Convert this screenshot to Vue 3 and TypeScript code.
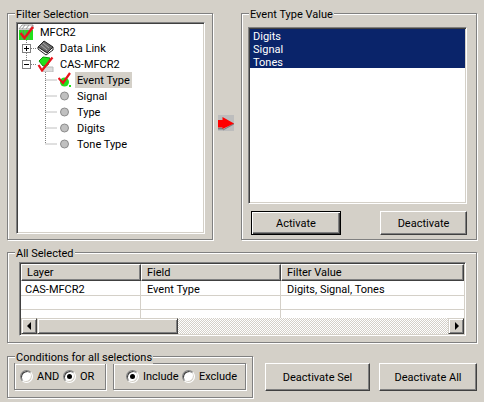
<script setup lang="ts">
interface TreeRow { label: string; level: number; icon: string; selected?: boolean }
const treeRows: TreeRow[] = [
  { label: 'MFCR2', level: 0, icon: 'root' },
  { label: 'Data Link', level: 1, icon: 'book' },
  { label: 'CAS-MFCR2', level: 1, icon: 'cas' },
  { label: 'Event Type', level: 2, icon: 'check', selected: true },
  { label: 'Signal', level: 2, icon: 'dot' },
  { label: 'Type', level: 2, icon: 'dot' },
  { label: 'Digits', level: 2, icon: 'dot' },
  { label: 'Tone Type', level: 2, icon: 'dot' },
]
const values = ['Digits', 'Signal', 'Tones']
const rows = [
  ['CAS-MFCR2', 'Event Type', 'Digits, Signal, Tones'],
  ['', '', ''],
  ['', '', ''],
]
</script>

<template>
  <div class="dialog">
    <div class="top">
      <section class="group filter">
        <span class="legend">Filter Selection</span>
        <div class="sunken tree">
          <svg class="lines" width="187" height="130" aria-hidden="true">
            <path d="M8.5 16V20M8.5 29V36M13 24.500H19M13 40.500H19M27.500 44V120M27.500 56H39M27.500 72H39M27.500 88H39M27.500 104H39M27.500 120H39" stroke="#808080" stroke-dasharray="1 1" fill="none" />
            <g fill="#fff" stroke="#808080">
              <rect x="4.500" y="20.500" width="8" height="8" />
              <rect x="4.500" y="36.500" width="8" height="8" />
            </g>
            <path d="M6 24.500H11M8.500 22V27M6 40.500H11" stroke="#000" />
          </svg>
          <div v-for="r in treeRows" :key="r.label" class="tree-row" :class="'lv' + r.level">
            <svg v-if="r.icon === 'root'" class="ico" width="16" height="16" viewBox="0 0 16 16">
              <path d="M1 5 4 1H15V5Z" fill="#fff" stroke="#999" stroke-width="1" />
              <path d="M4 5 7 1M8 5 11 1M12 5 15 1" stroke="#999" />
              <rect x="1" y="6" width="14" height="10" fill="#22e01c" />
              <path d="M4 6V16M7 6V16M11 6V16" stroke="#808080" />
              <path d="M2.500 9 6.500 14 15 3" stroke="#e8141c" stroke-width="2.400" fill="none" />
            </svg>
            <svg v-else-if="r.icon === 'book'" class="ico" width="17" height="16" viewBox="0 0 17 16">
              <path d="M1 7 7 1 16 7 10 13Z" fill="#6a6a6a" stroke="#222" />
              <path d="M1 7V9L9 15 16 10 16 7 10 13Z" fill="#fff" stroke="#222" />
              <path d="M4 5 10 10M6 3 12 8" stroke="#aaa" />
            </svg>
            <svg v-else-if="r.icon === 'cas'" class="ico" width="17" height="16" viewBox="0 0 17 16">
              <path d="M6 11H16V16H6Z" fill="#ddd" stroke="#bbb" />
              <path d="M2 5 6 1 13 2 11 9 6 10Z" fill="#22e01c" stroke="#0a9a0a" />
              <path d="M1.500 9 5 14.500 15.500 1.500" stroke="#e8141c" stroke-width="2.200" fill="none" />
            </svg>
            <svg v-else-if="r.icon === 'check'" class="ico" width="14" height="16" viewBox="0 0 14 16">
              <circle cx="6.500" cy="10" r="4.500" fill="#22e01c" />
              <rect x="11" y="13" width="2" height="2" fill="#22e01c" />
              <path d="M0.500 6 5 11 12 1" stroke="#e8141c" stroke-width="2.200" fill="none" />
            </svg>
            <svg v-else class="ico" width="14" height="16" viewBox="0 0 14 16">
              <circle cx="6.500" cy="8" r="4" fill="#c0c0c0" stroke="#8c8c8c" />
            </svg>
            <span class="tree-label" :class="{ selected: r.selected }">{{ r.label }}</span>
          </div>
        </div>
      </section>

      <div class="arrow-col">
        <svg class="arrow" width="16" height="16" viewBox="0 0 16 16" aria-hidden="true">
          <rect width="16" height="16" fill="#bdbdbd" />
          <path d="M5 14.500H0V13H5ZM5 14.500V15.500L16 9.500V8Z" fill="#808080" />
          <path d="M0 5H4.500V2L16 8.500 4.500 14V12.500H0Z" fill="#ff0000" />
        </svg>
      </div>

      <section class="group values">
        <span class="legend">Event Type Value</span>
        <div class="sunken list">
          <div v-for="v in values" :key="v" class="list-item">{{ v }}</div>
        </div>
        <div class="value-actions">
          <button class="btn default activate">Activate</button>
          <button class="btn deactivate">Deactivate</button>
        </div>
      </section>
    </div>

    <section class="group selected-group">
      <span class="legend">All Selected</span>
      <div class="sunken table">
        <div class="thead">
          <div class="th c1">Layer</div>
          <div class="th c2">Field</div>
          <div class="th c3">Filter Value</div>
        </div>
        <div class="tbody">
          <div v-for="(row, i) in rows" :key="i" class="tr">
            <div class="td c1 first">{{ row[0] }}</div>
            <div class="td c2">{{ row[1] }}</div>
            <div class="td c3">{{ row[2] }}</div>
          </div>
        </div>
        <div class="scrollbar">
          <div class="sb-btn"><i class="tri left"></i></div>
          <div class="sb-thumb"></div>
          <div class="sb-track"></div>
          <div class="sb-btn"><i class="tri right"></i></div>
        </div>
      </div>
    </section>

    <div class="bottom">
      <section class="group conditions">
        <span class="legend">Conditions for all selections</span>
        <div class="radio-box andor">
          <label class="radio r-and"><i class="dot-radio"></i>AND</label>
          <label class="radio"><i class="dot-radio on"></i>OR</label>
        </div>
        <div class="radio-box incl">
          <label class="radio r-inc"><i class="dot-radio on"></i>Include</label>
          <label class="radio"><i class="dot-radio"></i>Exclude</label>
        </div>
      </section>
      <button class="btn wide sel">Deactivate Sel</button>
      <button class="btn wide all">Deactivate All</button>
    </div>
  </div>
</template>

<style>
html, body { margin: 0; background: #d4d0c8; }
</style>

<style scoped>
.dialog {
  width: 484px;
  height: 402px;
  box-sizing: border-box;
  padding: 13px 7px 0;
  background: #d4d0c8;
  font: 11px/13px Roboto, "Liberation Sans", Arial, sans-serif;
  color: #000;
  overflow: hidden;
}
.top { display: flex; height: 227px; }
.group {
  position: relative;
  box-sizing: border-box;
  border: 1px solid #808080;
  box-shadow: 1px 1px 0 #fff, inset 1px 1px 0 #fff;
}
.legend {
  position: absolute;
  top: -6px;
  left: 7px;
  padding: 0 1px;
  background: #d4d0c8;
  white-space: nowrap;
}
.sunken {
  position: relative;
  box-sizing: border-box;
  background: #fff;
  border: 1px solid;
  border-color: #808080 #fff #fff #808080;
  box-shadow: inset 1px 1px 0 #404040, inset -1px -1px 0 #d4d0c8;
}
.filter { width: 206px; padding: 8px 8px 0 8px; }
.tree { width: 189px; height: 212px; padding: 1px 0 0 1px; }
.lines { position: absolute; left: 1px; top: 1px; }
.tree-row { position: relative; display: flex; align-items: center; height: 16px; }
.lv0 { padding-left: 0; }
.lv1 { padding-left: 19px; }
.lv2 { padding-left: 40px; }
.ico { flex: none; display: block; }
.tree-label { margin-left: 3px; padding: 2px 2px 0; height: 14px; line-height: 14px; white-space: nowrap; }
.lv0 .tree-label, .lv1 .tree-label { margin-left: 4px; }
.tree-label.selected { background: #d4d0c8; }
.arrow-col { width: 28px; flex: none; box-sizing: border-box; padding: 102px 0 0 5px; }
.arrow { display: block; }
.values { width: 236px; padding: 13px 9px 0 6px; }
.list { width: 219px; height: 177px; padding: 1px; }
.list-item {
  height: 13px;
  padding-left: 3px;
  background: #0a246a;
  color: #fff;
  line-height: 15px;
  overflow: hidden;
}
.value-actions { display: flex; justify-content: space-between; margin-top: 7px; padding: 0 0 0 3px; }
.btn {
  box-sizing: border-box;
  margin: 0;
  padding: 0;
  height: 24px;
  background: #d4d0c8;
  font: inherit;
  color: #000;
  border: 1px solid;
  border-color: #fff #404040 #404040 #fff;
  box-shadow: inset -1px -1px 0 #808080;
}
.activate { width: 90px; }
.deactivate { width: 87px; }
.btn.default {
  border: 1px solid #000;
  box-shadow: inset 1px 1px 0 #fff, inset -1px -1px 0 #404040, inset -2px -2px 0 #808080;
}
.selected-group { width: 470px; height: 91px; margin-top: 12px; padding: 9px 0 0 11px; }
.table { width: 447px; height: 74px; padding: 1px; background: #fff; }
.thead, .tr { display: flex; }
.thead { height: 17px; }
.th {
  box-sizing: border-box;
  padding: 0 0 0 5px;
  background: #d4d0c8;
  border: 1px solid;
  border-color: #fff #404040 #404040 #fff;
  box-shadow: inset -1px -1px 0 #808080;
  line-height: 16px;
}
.c1 { width: 120px; flex: none; }
.c2 { width: 140px; flex: none; }
.c3 { flex: 1; }
.tbody { height: 37px; overflow: hidden; }
.tr { height: 14px; }
.tr:first-child { height: 15px; }
.td {
  box-sizing: border-box;
  height: 100%;
  padding-left: 6px;
  border-right: 1px solid #d4d0c8;
  border-bottom: 1px solid #d4d0c8;
  line-height: 17px;
  white-space: nowrap;
  overflow: hidden;
}
.td.first { padding-left: 4px; }
.td.c3 { border-right: 0; }
.scrollbar { display: flex; height: 16px; }
.sb-btn, .sb-thumb {
  box-sizing: border-box;
  background: #d4d0c8;
  border: 1px solid;
  border-color: #d4d0c8 #404040 #404040 #d4d0c8;
  box-shadow: inset 1px 1px 0 #fff, inset -1px -1px 0 #808080;
}
.sb-btn { position: relative; width: 16px; flex: none; }
.sb-thumb { width: 141px; flex: none; }
.sb-track {
  flex: 1;
  background: repeating-conic-gradient(#d4d0c8 0 25%, #fff 0 50%) 0 0 / 2px 2px;
}
.tri { position: absolute; top: 3px; width: 0; height: 0; border: 4px solid transparent; }
.tri.left { left: 1px; border-right-color: #000; }
.tri.right { left: 6px; border-left-color: #000; }
.bottom { display: flex; align-items: flex-start; margin-top: 13px; }
.conditions {
  display: flex;
  gap: 7px;
  width: 246px;
  height: 42px;
  padding: 6px 0 0 6px;
  flex: none;
}
.radio-box {
  display: flex;
  align-items: center;
  box-sizing: border-box;
  height: 27px;
  border: 1px solid #808080;
  box-shadow: 1px 1px 0 #fff, inset 1px 1px 0 #fff;
}
.andor { width: 92px; padding-left: 5px; }
.incl { width: 133px; padding-left: 12px; }
.radio { display: flex; align-items: center; white-space: nowrap; }
.r-and { width: 43px; }
.r-inc { width: 56px; }
.dot-radio {
  position: relative;
  flex: none;
  box-sizing: border-box;
  width: 13px;
  height: 13px;
  margin-right: 4px;
  border-radius: 50%;
  background: #fff;
  border: 1px solid;
  border-color: #808080 #fff #fff #808080;
  box-shadow: inset 1px 1px 0 #404040, inset -1px -1px 0 #d4d0c8;
}
.dot-radio.on::after {
  content: "";
  position: absolute;
  left: 3px;
  top: 3px;
  width: 5px;
  height: 5px;
  border-radius: 50%;
  background: #000;
}
.wide { height: 28px; margin-top: 7px; }
.sel { width: 105px; margin-left: 12px; }
.all { width: 98px; margin-left: 9px; }
</style>
